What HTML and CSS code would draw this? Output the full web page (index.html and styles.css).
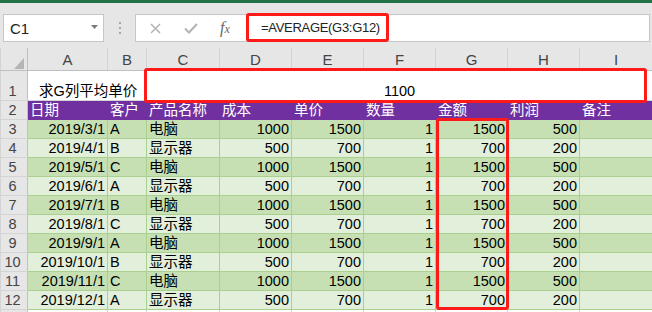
FILE: index.html
```html
<!DOCTYPE html>
<html lang="zh-CN">
<head>
    <meta charset="UTF-8">
    <meta name="viewport" content="width=device-width, initial-scale=1.0">
    <title>AVERAGE 求平均单价</title>
    <link rel="stylesheet" href="styles.css">
</head>
<body>
    <div class="titlebar"></div>

    <div class="toolbar">
        <div class="namebox">
            <span>C1</span>
            <svg class="caret" width="7" height="4" viewBox="0 0 7 4"><polygon points="0,0 7,0 3.5,4" fill="#7a7a7a"/></svg>
        </div>
        <div class="grip"><i></i><i></i><i></i></div>
        <div class="formulabar">
            <svg class="icon cancel" width="11" height="11" viewBox="0 0 11 11"><path d="M1 1 L10 10 M10 1 L1 10" stroke="#b3b3b3" stroke-width="1.5" fill="none"/></svg>
            <svg class="icon enter" width="14" height="11" viewBox="0 0 14 11"><path d="M1 5.5 L5 9.5 L13 1" stroke="#b3b3b3" stroke-width="2" fill="none"/></svg>
            <span class="fx">f<small>x</small></span>
            <span class="formula">=AVERAGE(G3:G12)</span>
        </div>
    </div>

    <div class="sheet">
        <table class="grid">
            <colgroup>
                <col class="c-row">
                <col class="c-a">
                <col class="c-b">
                <col class="c-c">
                <col class="c-n"><col class="c-n"><col class="c-n"><col class="c-n"><col class="c-n">
                <col class="c-last">
            </colgroup>
            <tr class="colhead">
                <th class="corner"><svg width="10" height="11" viewBox="0 0 10 11"><polygon points="10,0 10,11 0,11" fill="#b5b5b5"/></svg></th>
                <th>A</th><th>B</th><th>C</th><th>D</th><th>E</th><th>F</th><th>G</th><th>H</th><th>I</th>
            </tr>
            <tr class="title">
                <th>1</th>
                <td colspan="2" class="label">求G列平均单价</td>
                <td colspan="7" class="result">1100</td>
            </tr>
            <tr class="head">
                <th>2</th>
                <td>日期</td><td>客户</td><td>产品名称</td><td>成本</td><td>单价</td><td>数量</td><td>金额</td><td>利润</td><td>备注</td>
            </tr>
            <tr class="dark">
                <th>3</th><td class="num">2019/3/1</td><td>A</td><td>电脑</td><td class="num">1000</td><td class="num">1500</td><td class="num">1</td><td class="num">1500</td><td class="num">500</td><td></td>
            </tr>
            <tr class="light">
                <th>4</th><td class="num">2019/4/1</td><td>B</td><td>显示器</td><td class="num">500</td><td class="num">700</td><td class="num">1</td><td class="num">700</td><td class="num">200</td><td></td>
            </tr>
            <tr class="dark">
                <th>5</th><td class="num">2019/5/1</td><td>C</td><td>电脑</td><td class="num">1000</td><td class="num">1500</td><td class="num">1</td><td class="num">1500</td><td class="num">500</td><td></td>
            </tr>
            <tr class="light">
                <th>6</th><td class="num">2019/6/1</td><td>A</td><td>显示器</td><td class="num">500</td><td class="num">700</td><td class="num">1</td><td class="num">700</td><td class="num">200</td><td></td>
            </tr>
            <tr class="dark">
                <th>7</th><td class="num">2019/7/1</td><td>B</td><td>电脑</td><td class="num">1000</td><td class="num">1500</td><td class="num">1</td><td class="num">1500</td><td class="num">500</td><td></td>
            </tr>
            <tr class="light">
                <th>8</th><td class="num">2019/8/1</td><td>C</td><td>显示器</td><td class="num">500</td><td class="num">700</td><td class="num">1</td><td class="num">700</td><td class="num">200</td><td></td>
            </tr>
            <tr class="dark">
                <th>9</th><td class="num">2019/9/1</td><td>A</td><td>电脑</td><td class="num">1000</td><td class="num">1500</td><td class="num">1</td><td class="num">1500</td><td class="num">500</td><td></td>
            </tr>
            <tr class="light">
                <th>10</th><td class="num">2019/10/1</td><td>B</td><td>显示器</td><td class="num">500</td><td class="num">700</td><td class="num">1</td><td class="num">700</td><td class="num">200</td><td></td>
            </tr>
            <tr class="dark">
                <th>11</th><td class="num">2019/11/1</td><td>C</td><td>电脑</td><td class="num">1000</td><td class="num">1500</td><td class="num">1</td><td class="num">1500</td><td class="num">500</td><td></td>
            </tr>
            <tr class="light">
                <th>12</th><td class="num">2019/12/1</td><td>A</td><td>显示器</td><td class="num">500</td><td class="num">700</td><td class="num">1</td><td class="num">700</td><td class="num">200</td><td></td>
            </tr>
            <tr class="blank">
                <th></th><td></td><td></td><td></td><td></td><td></td><td></td><td></td><td></td><td></td>
            </tr>
        </table>

        <!-- annotation boxes drawn over the sheet -->
        <div class="mark mark-result"></div>
        <div class="mark mark-column"></div>
    </div>
</body>
</html>
```

FILE: styles.css
```css
body {
    margin: 0;
    padding: 0;
    width: 652px;
    height: 312px;
    overflow: hidden;
    background-color: #e6e6e6;
    font-family: "Liberation Sans", "Noto Sans CJK SC", sans-serif;
    color: #000;
}

.titlebar {
    height: 3px;
    background-color: #217346;
}

/* name box + formula bar */
.toolbar {
    display: flex;
    align-items: flex-start;
    height: 45px;
    padding: 11px 2px 0 3px;
    box-sizing: border-box;
}

.namebox {
    width: 101px;
    height: 28px;
    box-sizing: border-box;
    background: #fff;
    border: 1px solid #c6c6c6;
    display: flex;
    align-items: center;
    justify-content: space-between;
    padding: 0 5px 0 6px;
    font-size: 15px;
    color: #222;
}

.caret {
    margin-top: -2px;
}

.grip {
    width: 31px;
    height: 28px;
    display: flex;
    flex-direction: column;
    align-items: center;
    justify-content: center;
    gap: 3px;
}

.grip i {
    display: block;
    width: 2px;
    height: 2px;
    background: #a8a8a8;
}

.formulabar {
    flex: 1;
    height: 28px;
    box-sizing: border-box;
    background: #fff;
    border: 1px solid #c6c6c6;
    display: flex;
    align-items: center;
}

.icon.cancel {
    margin-left: 14px;
}

.icon.enter {
    margin-left: 23px;
}

.fx {
    margin-left: 22px;
    width: 26px;
    font-family: "Liberation Serif", serif;
    font-style: italic;
    font-size: 16px;
    color: #666;
}

.fx small {
    font-size: 12px;
}

.formula {
    align-self: flex-start;
    margin-top: -2px;
    width: 143px;
    height: 29px;
    box-sizing: border-box;
    border: 3px solid #ff1a1a;
    border-radius: 3px;
    padding-left: 12px;
    line-height: 23px;
    font-size: 13px;
    letter-spacing: -0.3px;
    color: #222;
}

/* worksheet */
.sheet {
    position: relative;
}

.grid {
    border-collapse: collapse;
    table-layout: fixed;
    width: 652px;
    font-size: 14.5px;
}

.c-row { width: 27px; }
.c-a { width: 80px; }
.c-b { width: 39px; }
.c-c { width: 73px; }
.c-n { width: 72px; }
.c-last { width: 73px; }

.grid th,
.grid td {
    padding: 0 2px;
    white-space: nowrap;
    overflow: hidden;
    vertical-align: bottom;
    line-height: 18px;
}

.grid th {
    background: #e6e6e6;
    color: #444;
    font-weight: normal;
    border: 1px solid #d4d4d4;
    text-align: center;
    padding: 0 3px 0 0;
}

.grid tr > th:first-child {
    border-right-color: #c0c0c0;
}

.colhead th {
    height: 21px;
    border-top: none;
    border-bottom-color: #c0c0c0;
    padding: 0 0 1px;
    vertical-align: bottom;
    font-size: 15px;
}

.colhead .corner {
    text-align: right;
    vertical-align: bottom;
    padding: 0 3px 1px 0;
    line-height: 0;
}

.title th,
.title td {
    height: 29px;
    background: #fff;
}

.title th {
    background: #e6e6e6;
}

.title td {
    border: 1px solid #d4d4d4;
}

.title .label {
    padding-left: 11px;
}

.title .result {
    text-align: center;
}

.head td {
    height: 18px;
    background: #7030a0;
    color: #fff;
    border: 1px solid #7030a0;
}

.dark td,
.light td {
    height: 18px;
    border: 1px solid #a9d08e;
}

.dark td {
    background: #c6e0b4;
}

.light td {
    background: #e2efda;
}

.blank td {
    height: 18px;
    background: #fff;
    border: 1px solid #d4d4d4;
}

.grid td.num {
    text-align: right;
}

.mark {
    position: absolute;
    box-sizing: border-box;
    border: 3px solid #ff1a1a;
    border-radius: 3px;
}

.mark-result {
    left: 144px;
    top: 20px;
    width: 503px;
    height: 35px;
}

.mark-column {
    left: 436px;
    top: 70px;
    width: 73px;
    height: 192px;
}
```
